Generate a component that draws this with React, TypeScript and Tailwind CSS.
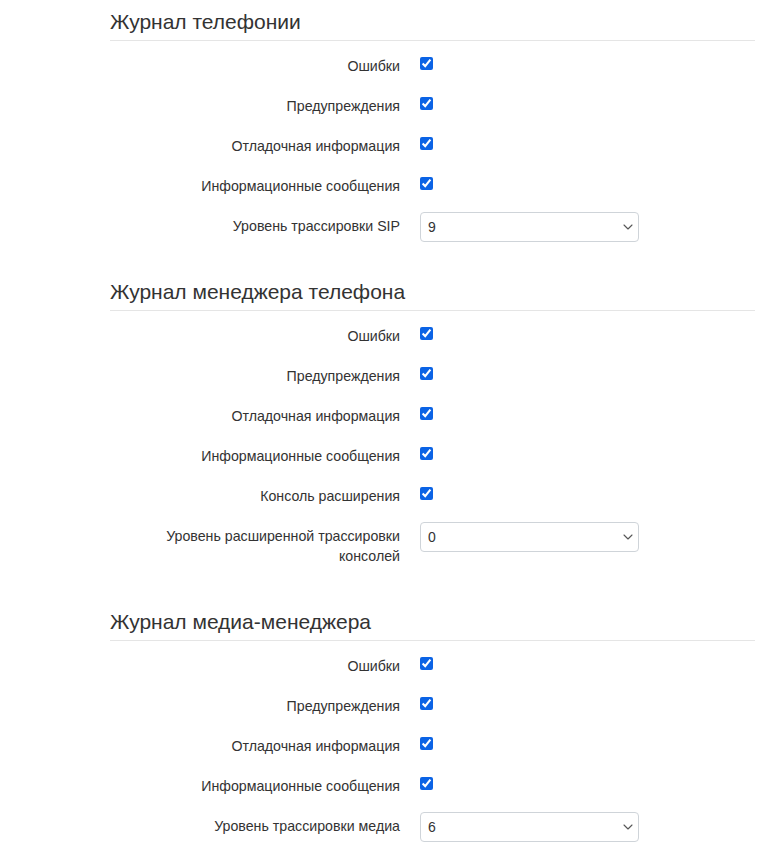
import { ChevronDown } from "lucide-react";

type Row =
  | { kind: "check"; label: string }
  | { kind: "select"; label: string; value: string; options: string[] };

const levels = ["0", "1", "2", "3", "4", "5", "6", "7", "8", "9"];

const sections: { title: string; rows: Row[] }[] = [
  {
    title: "Журнал телефонии",
    rows: [
      { kind: "check", label: "Ошибки" },
      { kind: "check", label: "Предупреждения" },
      { kind: "check", label: "Отладочная информация" },
      { kind: "check", label: "Информационные сообщения" },
      { kind: "select", label: "Уровень трассировки SIP", value: "9", options: levels },
    ],
  },
  {
    title: "Журнал менеджера телефона",
    rows: [
      { kind: "check", label: "Ошибки" },
      { kind: "check", label: "Предупреждения" },
      { kind: "check", label: "Отладочная информация" },
      { kind: "check", label: "Информационные сообщения" },
      { kind: "check", label: "Консоль расширения" },
      {
        kind: "select",
        label: "Уровень расширенной трассировки консолей",
        value: "0",
        options: levels,
      },
    ],
  },
  {
    title: "Журнал медиа-менеджера",
    rows: [
      { kind: "check", label: "Ошибки" },
      { kind: "check", label: "Предупреждения" },
      { kind: "check", label: "Отладочная информация" },
      { kind: "check", label: "Информационные сообщения" },
      { kind: "select", label: "Уровень трассировки медиа", value: "6", options: levels },
    ],
  },
];

function FormRow({ row }: { row: Row }) {
  return (
    <div className="mb-5 flex items-start">
      <label
        className={`w-[310px] pl-[30px] pr-5 text-right text-[14.2px] leading-5 ${
          row.kind === "select" ? "pb-[6px]" : ""
        }`}
      >
        {row.label}
      </label>
      {row.kind === "check" ? (
        <input
          type="checkbox"
          defaultChecked
          className="m-0 mt-px h-[13px] w-[13px] accent-[#0b63e5]"
        />
      ) : (
        <div className="relative -mt-1 w-[219px]">
          <select
            defaultValue={row.value}
            className="h-[30px] w-full appearance-none rounded-[4px] border border-[#cfd4d9] bg-white pl-[7px] pr-6 text-[14px] text-[#333] outline-none"
          >
            {row.options.map((o) => (
              <option key={o} value={o}>
                {o}
              </option>
            ))}
          </select>
          <ChevronDown
            size={16}
            strokeWidth={1.6}
            className="pointer-events-none absolute right-[3px] top-[7px] text-[#555]"
          />
        </div>
      )}
    </div>
  );
}

export default function App() {
  return (
    <div className="min-h-screen bg-white pl-[110px] pr-[10px] pt-[10px] font-['Liberation_Sans',Arial,sans-serif] text-[#333]">
      {sections.map((s, i) => (
        <section key={s.title} className={i > 0 ? "mt-[38px]" : ""}>
          <h2 className="mb-[15px] border-b border-[#e5e5e5] pb-[6px] text-[21px] font-normal leading-6 text-[#333]">
            {s.title}
          </h2>
          {s.rows.map((r) => (
            <FormRow key={r.label} row={r} />
          ))}
        </section>
      ))}
    </div>
  );
}
